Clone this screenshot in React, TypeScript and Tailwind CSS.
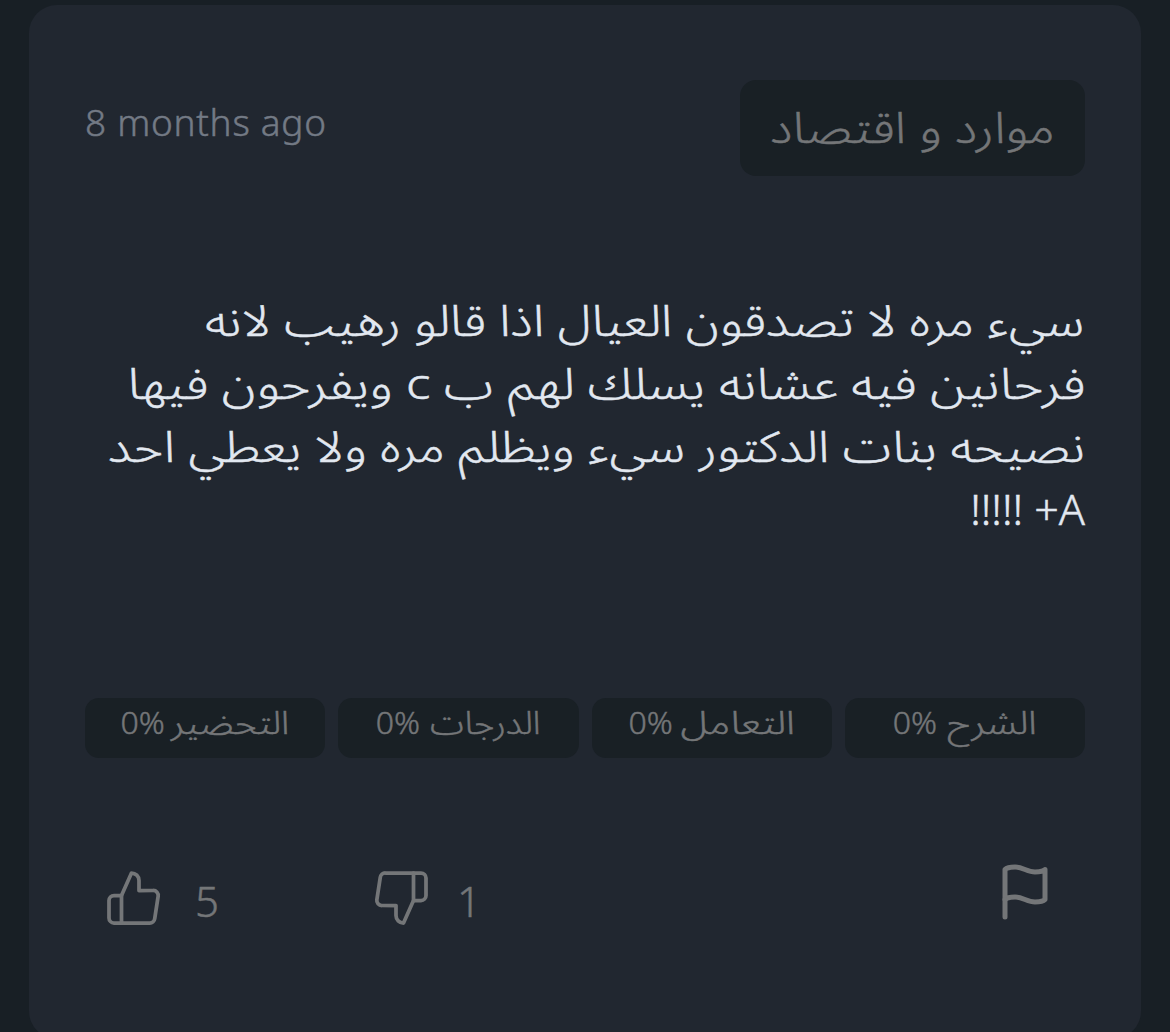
import React from "react";

const reviewLines = [
  { text: "سيء مره لا تصدقون العيال اذا قالو رهيب لانه", style: "text-[43px] scale-x-[1.172]" },
  { text: "فرحانين فيه عشانه يسلك لهم ب c ويفرحون فيها", style: "text-[43px] scale-x-[1.194]" },
  { text: "نصيحه بنات الدكتور سيء ويظلم مره ولا يعطي احد", style: "text-[43px] scale-x-[1.177]" },
  { text: "A+ !!!!!", style: "text-[43px] scale-x-100" },
];

const ratings = [
  { label: "الشرح", value: 0, width: "w-[90px]", stretch: "scale-x-[1.2]", gap: "gap-[10px]" },
  { label: "التعامل", value: 0, width: "w-[112px]", stretch: "scale-x-[1.26]", gap: "gap-[10px]" },
  { label: "الدرجات", value: 0, width: "w-[109px]", stretch: "scale-x-[1.1]", gap: "gap-[12px]" },
  { label: "التحضير", value: 0, width: "w-[118px]", stretch: "scale-x-[1.17]", gap: "gap-[7px]" },
];

const ThumbIcon = ({ className = "" }: { className?: string }) => (
  <svg
    viewBox="0 0 24 24"
    className={`size-[60px] shrink-0 ${className}`}
    fill="none"
    stroke="currentColor"
    strokeWidth="1.5"
    strokeLinecap="round"
    strokeLinejoin="round"
  >
    <path d="M14 9V5a3 3 0 0 0-3-3l-4 9v11h11.28a2 2 0 0 0 2-1.7l1.38-9a2 2 0 0 0-2-2.3z" />
    <path d="M7 22H4a2 2 0 0 1-2-2v-7a2 2 0 0 1 2-2h3" />
  </svg>
);

const FlagIcon = () => (
  <svg
    viewBox="0 0 24 24"
    className="size-[60px] shrink-0"
    fill="none"
    stroke="currentColor"
    strokeWidth="2"
    strokeLinecap="round"
    strokeLinejoin="round"
  >
    <path d="M4 15s1-1 4-1 5 2 8 2 4-1 4-1V3s-1 1-4 1-5-2-8-2-4 1-4 1z" />
    <path d="M4 22v-7" />
  </svg>
);

const App = () => {
  return (
    <div className="h-[1032px] w-[1170px] overflow-hidden bg-[#181f25] px-[29px] pt-[5px] font-['Noto_Sans','Noto_Sans_Arabic','DejaVu_Sans',sans-serif] font-light text-[#747678] [-webkit-text-stroke:0.5px]">
      <article className="h-[1034px] rounded-[28px] bg-[#212730] px-14 pt-[75px]">
        <header className="flex h-24 items-start justify-between">
          <time className="mt-[14px] text-[37px] leading-[56px] tracking-[0.72px] whitespace-nowrap text-[#737a85]">
            8 months ago
          </time>
          <div dir="rtl" className="flex h-24 w-[345px] items-center justify-center rounded-[16px] bg-[#192025]">
            <span className="scale-x-[1.17] pb-px text-[43px] whitespace-nowrap">موارد و اقتصاد</span>
          </div>
        </header>

        <div dir="rtl" className="mt-[112px] text-[#e2e8f0]">
          {reviewLines.map((line) => (
            <p key={line.text} className="h-[63px] leading-[63px] whitespace-nowrap">
              <span className={`inline-block origin-right ${line.style}`}>{line.text}</span>
            </p>
          ))}
        </div>

        <div dir="rtl" className="mt-[158px] grid grid-cols-4 gap-[13px]">
          {ratings.map((r) => (
            <div
              key={r.label}
              className={`flex h-[60px] justify-center rounded-[14px] bg-[#192025] text-[32px] leading-[48px] whitespace-nowrap ${r.gap}`}
            >
              <span className={r.width}>
                <span className={`inline-block origin-right ${r.stretch}`}>{r.label}</span>
              </span>
              <span dir="ltr">{r.value}%</span>
            </div>
          ))}
        </div>

        <footer className="mt-[104px] flex items-start pl-[19px] text-[42px] leading-[60px]">
          <ThumbIcon className="mt-[6px]" />
          <span className="mt-[9px] ml-[31px] w-6">5</span>
          <ThumbIcon className="mt-[6px] ml-[152px] rotate-180" />
          <span className="mt-[9px] ml-[26px]">1</span>
          <div className="mr-[30px] ml-auto">
            <FlagIcon />
          </div>
        </footer>
      </article>
    </div>
  );
};

export default App;
